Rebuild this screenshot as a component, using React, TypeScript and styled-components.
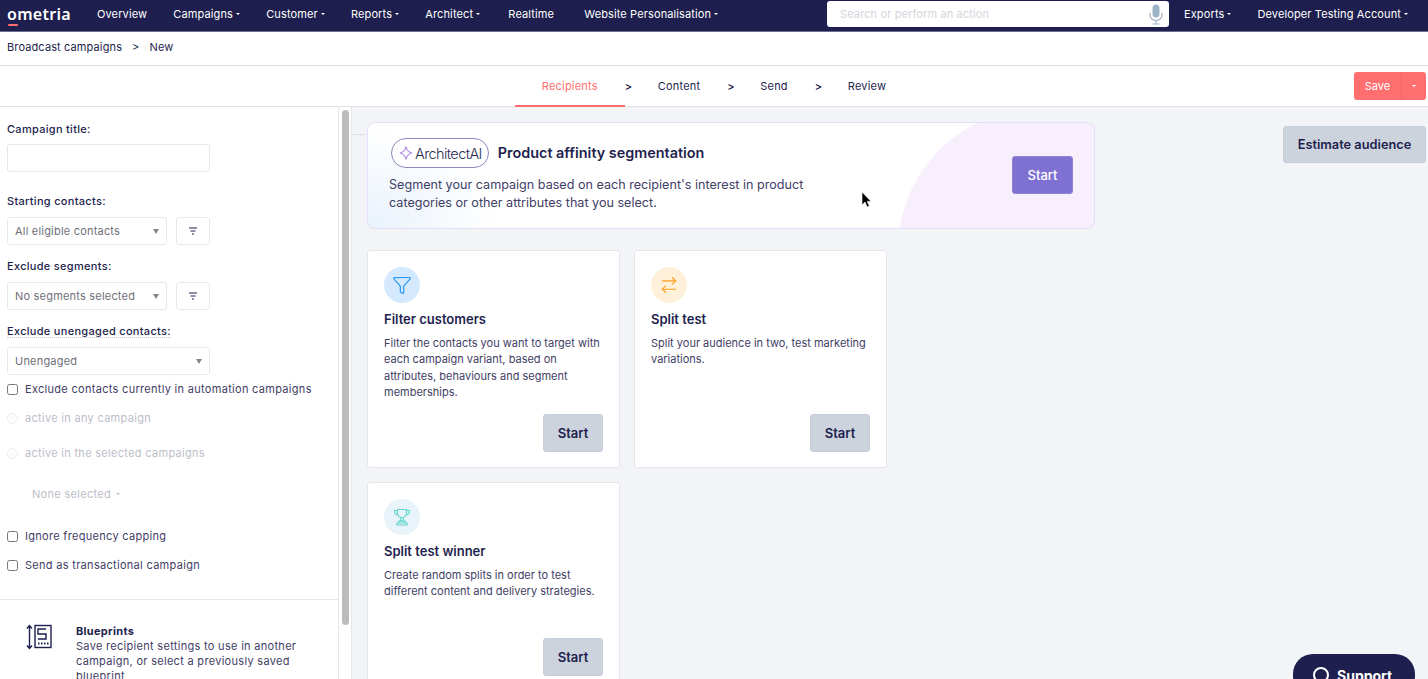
import React from "react"
import styled, { createGlobalStyle } from "styled-components"
import { ArrowRightLeft, Filter } from "lucide-react"

const navy = "#1e1f4e"
const body = "#3f4066"
const coral = "#ff6f6f"
const uiFont = `"Inter", "Liberation Sans", sans-serif`

const GlobalStyle = createGlobalStyle`
  html, body {
    margin: 0;
    height: 100%;
    overflow: hidden;
    background: #f3f4f8;
    font-family: ${uiFont};
    color: ${navy};
  }
  #root { height: 100%; }
`

const Page = styled.div`
  position: relative;
  display: flex;
  flex-direction: column;
  height: 679px;
  overflow: hidden;
`

const TopNav = styled.nav`
  display: flex;
  align-items: center;
  flex: none;
  height: 28px;
  padding: 0 20px 3px 7px;
  background: ${navy};
  border-bottom: 1px solid #6d6e8f;
  color: #fff;
  font-size: 11px;
  letter-spacing: 0.12px;
`

const Logo = styled.div`
  position: relative;
  width: 63px;
  margin-right: 27px;
  font-family: "Noto Sans", sans-serif;
  font-size: 16px;
  font-weight: 600;
  line-height: 18px;
  letter-spacing: 0.3px;

  &::after {
    content: "";
    position: absolute;
    left: 1px;
    bottom: -3px;
    width: 10px;
    height: 2px;
    border-radius: 1px;
    background: ${coral};
  }
`

const NavItems = styled.div<{ $gap: number }>`
  display: flex;
  gap: ${p => p.$gap}px;
`

const NavItem = styled.span<{ $before?: number; $after?: number }>`
  display: inline-flex;
  align-items: center;
  gap: 3px;
  margin: 0 ${p => p.$after || 0}px 0 ${p => p.$before || 0}px;
  white-space: nowrap;
`

const Caret = styled.i<{ $color?: string }>`
  width: 0;
  height: 0;
  border-left: 2px solid transparent;
  border-right: 2px solid transparent;
  border-top: 2px solid ${p => p.$color || "#fff"};
`

const SearchBox = styled.div`
  display: flex;
  align-items: center;
  justify-content: space-between;
  width: 342px;
  height: 26px;
  margin: 0 15px 0 auto;
  padding: 0 6px 0 13px;
  box-sizing: border-box;
  background: #fff;
  border-radius: 3px;
  color: #d4d5dc;
  font-size: 11px;
`

const Breadcrumbs = styled.div`
  display: flex;
  align-items: center;
  flex: none;
  gap: 10px;
  height: 30px;
  padding: 0 7px 3px;
  background: #fff;
  border-bottom: 1px solid #dcdde1;
  font-size: 11px;
  letter-spacing: 0.12px;
`

const StepsBar = styled.div`
  display: grid;
  grid-template-columns: 1fr auto 1fr;
  align-items: stretch;
  flex: none;
  height: 40px;
  background: #fff;
  border-bottom: 1px solid #e2e3e8;
`

const Steps = styled.div`
  grid-column: 2;
  display: flex;
  align-items: center;
  height: 40px;
  font-size: 11px;
  letter-spacing: 0.2px;
`

const Step = styled.div<{ $active?: boolean }>`
  display: flex;
  align-items: center;
  align-self: stretch;
  padding: 0 27px;
  color: ${p => (p.$active ? coral : navy)};
  border-bottom: 2px solid ${p => (p.$active ? coral : "transparent")};
  box-sizing: border-box;
  height: 41px;
`

const StepSep = styled.span`
  width: 6px;
  font-size: 11px;
  font-weight: 600;
  text-align: center;
`

const SaveButton = styled.div`
  justify-self: end;
  align-self: start;
  display: flex;
  height: 28px;
  margin: 6px 2px 0 0;
  border-radius: 3px;
  overflow: hidden;
  background: ${coral};
  color: #fff;
  font-size: 11px;
`

const SaveLabel = styled.span`
  display: flex;
  align-items: center;
  justify-content: center;
  width: 47px;
  border-right: 1px solid #f46565;
`

const SaveCaret = styled.span`
  display: flex;
  align-items: center;
  justify-content: center;
  width: 24px;
`

const Content = styled.div`
  display: flex;
  flex: 1;
  min-height: 0;
`

const Sidebar = styled.aside`
  flex: none;
  width: 338px;
  padding-top: 15px;
  overflow: hidden;
  background: #fff;
  border-right: 1px solid #e6e7ea;
  font-size: 11px;
  letter-spacing: 0.3px;
`

const Track = styled.div`
  flex: none;
  width: 13px;
  padding: 3px 3px 0;
  box-sizing: border-box;
  background: #fff;
  border-right: 1px solid #e6e7ea;
`

const Thumb = styled.div`
  width: 7px;
  height: 515px;
  border-radius: 4px;
  background: #bcbcbc;
`

const FieldLabel = styled.div<{ $top?: number; $underline?: boolean; $gap?: number }>`
  width: fit-content;
  height: 14px;
  margin: ${p => p.$top || 0}px 0 ${p => p.$gap ?? 9}px 7px;
  box-sizing: border-box;
  font-weight: 500;
  line-height: 14px;
  border-bottom: ${p => (p.$underline ? "1px dotted #c9c9d4" : "none")};
`

const TextInput = styled.input`
  display: block;
  width: 203px;
  height: 28px;
  margin-left: 7px;
  box-sizing: border-box;
  background: #fff;
  border: 1px solid #e8e8ec;
  border-radius: 3px;
  outline: none;
`

const SelectRow = styled.div`
  display: flex;
  gap: 9px;
  margin-left: 7px;
`

const SelectBox = styled.div<{ $width: number }>`
  display: flex;
  align-items: center;
  justify-content: space-between;
  width: ${p => p.$width}px;
  height: 28px;
  padding: 0 7px;
  box-sizing: border-box;
  background: #fff;
  border: 1px solid #e8e8ec;
  border-radius: 3px;
  color: #6f7078;
  letter-spacing: 0.2px;
`

const SelectArrow = styled.i`
  width: 0;
  height: 0;
  border-left: 3.5px solid transparent;
  border-right: 3.5px solid transparent;
  border-top: 5px solid #85858a;
`

const IconButton = styled.div`
  display: flex;
  align-items: center;
  justify-content: center;
  width: 34px;
  height: 28px;
  box-sizing: border-box;
  border: 1px solid #e8e8ec;
  border-radius: 3px;
`

const CheckRow = styled.label<{ $top: number; $muted?: boolean }>`
  display: flex;
  align-items: center;
  gap: 7px;
  height: 16px;
  margin: ${p => p.$top}px 0 0 7px;
  color: ${p => (p.$muted ? "#bdbdca" : body)};
  white-space: nowrap;
`

const CheckBox = styled.input`
  flex: none;
  width: 11px;
  height: 11px;
  margin: 0;
  accent-color: ${navy};
  opacity: ${p => (p.disabled ? 0.35 : 1)};
`

const NoneSelected = styled.div`
  display: flex;
  align-items: center;
  gap: 5px;
  height: 16px;
  margin: 25px 0 0 32px;
  color: #bdbdca;
`

const Divider = styled.div`
  height: 1px;
  margin-top: 26px;
  background: #e6e7ea;
`

const BlueprintRow = styled.div`
  display: flex;
  gap: 24px;
  margin: 24px 40px 0 26px;

  svg {
    flex: none;
  }
`

const BlueprintText = styled.div`
  color: ${body};
  line-height: 15px;
`

const BlueprintTitle = styled.div`
  color: ${navy};
  font-weight: 700;
`

const Main = styled.main`
  position: relative;
  display: flex;
  flex: 1;
  min-width: 0;
  padding: 15px 2px 0 15px;
  background: #f3f4f8;
  overflow: hidden;
`

const Column = styled.div`
  flex: none;
  width: 728px;
`

const Hero = styled.section`
  position: relative;
  display: flex;
  align-items: center;
  justify-content: space-between;
  height: 107px;
  padding: 0 21px 1px 21px;
  box-sizing: border-box;
  border: 1px solid #e3dff6;
  border-radius: 8px;
  background:
    radial-gradient(circle 144px at 673px 128px, #f7f0fc 99%, transparent 100%),
    radial-gradient(ellipse 130px 100px at 0 100%, #e9f2fb 0%, #fff 100%);
  background-color: #fff;

  &::before {
    content: "";
    position: absolute;
    left: -15px;
    top: 11px;
    width: 12px;
    height: 1px;
    background: #dcdde1;
  }
`

const HeroHead = styled.div`
  display: flex;
  align-items: center;
  gap: 9px;
  margin: 0 0 8px 2px;
`

const AiBadge = styled.div`
  display: flex;
  align-items: center;
  gap: 1px;
  height: 28px;
  padding: 0 6px;
  border: 1px solid #8b87bb;
  border-radius: 15px;
  background: #fff;
  color: #2c2d52;
  font-size: 14.5px;
  font-weight: 300;
  letter-spacing: -0.6px;
`

const HeroTitle = styled.h2`
  margin: 0;
  font-size: 14.4px;
  font-weight: 600;
  line-height: 18px;
`

const HeroText = styled.p`
  width: 430px;
  margin: 0;
  color: ${body};
  font-size: 12.6px;
  line-height: 18px;
`

const StartButton = styled.button<{ $accent?: boolean }>`
  flex: none;
  width: ${p => (p.$accent ? 61 : 60)}px;
  height: 38px;
  padding: 0;
  border: 1px solid ${p => (p.$accent ? "#8d82d8" : "#c6ced9")};
  border-radius: 3px;
  background: ${p => (p.$accent ? "#7f71d2" : "#ccd3dd")};
  color: ${p => (p.$accent ? "#fff" : navy)};
  font-family: ${uiFont};
  font-size: 13px;
  font-weight: ${p => (p.$accent ? 500 : 600)};
`

const CardGrid = styled.div`
  display: grid;
  grid-template-columns: repeat(2, 253px);
  gap: 14px;
  margin-top: 21px;
`

const Card = styled.article<{ $height: number }>`
  display: flex;
  flex-direction: column;
  height: ${p => p.$height}px;
  padding: 16px 16px 15px;
  box-sizing: border-box;
  background: #fff;
  border: 1px solid #e4e6ec;
  border-radius: 3px;
`

const IconCircle = styled.div<{ $bg: string; $fg: string }>`
  display: flex;
  align-items: center;
  justify-content: center;
  width: 36px;
  height: 36px;
  border-radius: 50%;
  background: ${p => p.$bg};
  color: ${p => p.$fg};
`

const CardTitle = styled.h3`
  margin: 8px 0 8px;
  font-size: 13px;
  font-weight: 600;
  line-height: 16px;
`

const CardText = styled.p`
  margin: 0;
  color: ${body};
  font-size: 11px;
  line-height: 16.3px;
`

const CardFooter = styled.div`
  display: flex;
  justify-content: flex-end;
  margin-top: auto;
`

const EstimateButton = styled.button`
  width: 143px;
  height: 37px;
  margin: 4px 0 0 auto;
  padding: 0;
  border: 1px solid #c6ced9;
  border-radius: 3px;
  background: #ccd3dd;
  color: ${navy};
  font-family: ${uiFont};
  font-size: 12.8px;
  font-weight: 600;
`

const Support = styled.div`
  position: absolute;
  left: 1293px;
  top: 654px;
  display: flex;
  align-items: center;
  gap: 8px;
  width: 122px;
  height: 42px;
  padding-left: 20px;
  box-sizing: border-box;
  border-radius: 20px;
  background: ${navy};
  color: #fff;
  font-size: 14px;
  font-weight: 700;
`

const SupportRing = styled.i`
  width: 12px;
  height: 12px;
  border: 2.5px solid #fff;
  border-radius: 50%;
`

const Pointer = styled.svg`
  position: absolute;
  left: 861px;
  top: 191px;
`

const MicIcon = () => (
  <svg width="14" height="21" viewBox="0 0 14 21" fill="none">
    <rect x="3.5" y="0.5" width="7" height="13" rx="3.5" fill="#9fb3c8" />
    <path d="M1 9v1.5a6 6 0 0 0 12 0V9" stroke="#9fb3c8" strokeWidth="1.2" />
    <path d="M7 16.5V20M3.5 20h7" stroke="#9fb3c8" strokeWidth="1.2" />
  </svg>
)

const FilterLines = () => (
  <svg width="10" height="8" viewBox="0 0 10 8" fill="none" stroke={navy} strokeWidth="1">
    <path d="M1 1h8M2.5 4h5M4 7h2" />
  </svg>
)

const Sparkle = () => (
  <svg width="16" height="16" viewBox="0 0 16 16" fill="none" stroke="#b08ae8" strokeWidth="1.2">
    <path d="M8 1.5c.6 3.6 2.4 5.6 6 6.5-3.6.9-5.4 2.9-6 6.5-.6-3.6-2.4-5.6-6-6.5 3.6-.9 5.4-2.9 6-6.5z" />
  </svg>
)

const TrophyIcon = () => (
  <svg width="20" height="20" viewBox="0 0 20 20" fill="none" stroke="currentColor" strokeWidth="1.2">
    <path d="M5.5 2.5h9v3.5c0 2.6-2 4.5-4.5 4.5S5.5 8.6 5.5 6z" />
    <path d="M5.5 3.5H2.5c0 2.8 1 4 3.5 4.5M14.5 3.5h3c0 2.8-1 4-3.5 4.5" />
    <path d="M8.8 10.5v3.5M11.2 10.5v3.5M6.8 14.2h6.4v1.8H6.8zM5 16h10v2H5z" />
  </svg>
)

const BlueprintIcon = () => (
  <svg width="26" height="26" viewBox="0 0 26 26" fill="none" stroke={navy}>
    <path d="M3.5 2v22M1 4.5l2.5-3 2.5 3M1 21.5l2.5 3 2.5-3" strokeWidth="1.4" />
    <rect x="9" y="1.5" width="16" height="22" strokeWidth="1.4" />
    <path d="M20 5h-8v5h8v5h-8" strokeWidth="1.4" />
    <path d="M12 19.5h1.5M15 19.5h1.5M18 19.5h1.5M21 19.5h1.5" strokeWidth="2" />
  </svg>
)

const navLinks = [
  { label: "Overview" },
  { label: "Campaigns", caret: true },
  { label: "Customer", caret: true },
  { label: "Reports", caret: true },
  { label: "Architect", caret: true },
  { label: "Realtime", before: 2, after: 4 },
  { label: "Website Personalisation", caret: true },
]

const steps = ["Recipients", "Content", "Send", "Review"]

const cards = [
  {
    title: "Filter customers",
    text: "Filter the contacts you want to target with each campaign variant, based on attributes, behaviours and segment memberships.",
    bg: "#d4e9fd",
    fg: "#2f9bf4",
    icon: <Filter size={20} strokeWidth={1.5} />,
    height: 218,
  },
  {
    title: "Split test",
    text: "Split your audience in two, test marketing variations.",
    bg: "#fff0da",
    fg: "#fb9f1c",
    icon: <ArrowRightLeft size={20} strokeWidth={1.3} />,
    height: 218,
  },
  {
    title: "Split test winner",
    text: "Create random splits in order to test different content and delivery strategies.",
    bg: "#e8f4fa",
    fg: "#62d6cc",
    icon: <TrophyIcon />,
    height: 210,
  },
]

export default function App() {
  return (
    <Page>
      <GlobalStyle />
      <TopNav>
        <Logo>ometria</Logo>
        <NavItems $gap={26.2}>
          {navLinks.map(link => (
            <NavItem key={link.label} $before={link.before} $after={link.after}>
              {link.label}
              {link.caret && <Caret />}
            </NavItem>
          ))}
        </NavItems>
        <SearchBox>
          Search or perform an action
          <MicIcon />
        </SearchBox>
        <NavItems $gap={26}>
          <NavItem>
            Exports
            <Caret />
          </NavItem>
          <NavItem>
            Developer Testing Account
            <Caret />
          </NavItem>
        </NavItems>
      </TopNav>

      <Breadcrumbs>
        <span>Broadcast campaigns</span>
        <span>&gt;</span>
        <span>New</span>
      </Breadcrumbs>

      <StepsBar>
        <Steps>
          {steps.map((step, i) => (
            <React.Fragment key={step}>
              {i > 0 && <StepSep>&gt;</StepSep>}
              <Step $active={i === 0}>{step}</Step>
            </React.Fragment>
          ))}
        </Steps>
        <SaveButton>
          <SaveLabel>Save</SaveLabel>
          <SaveCaret>
            <Caret />
          </SaveCaret>
        </SaveButton>
      </StepsBar>

      <Content>
        <Sidebar>
          <FieldLabel $gap={8}>Campaign title:</FieldLabel>
          <TextInput />

          <FieldLabel $top={22}>Starting contacts:</FieldLabel>
          <SelectRow>
            <SelectBox $width={160}>
              All eligible contacts
              <SelectArrow />
            </SelectBox>
            <IconButton>
              <FilterLines />
            </IconButton>
          </SelectRow>

          <FieldLabel $top={14}>Exclude segments:</FieldLabel>
          <SelectRow>
            <SelectBox $width={160}>
              No segments selected
              <SelectArrow />
            </SelectBox>
            <IconButton>
              <FilterLines />
            </IconButton>
          </SelectRow>

          <FieldLabel $top={14} $underline>
            Exclude unengaged contacts:
          </FieldLabel>
          <SelectRow>
            <SelectBox $width={203}>
              Unengaged
              <SelectArrow />
            </SelectBox>
          </SelectRow>

          <CheckRow $top={6}>
            <CheckBox type="checkbox" />
            Exclude contacts currently in automation campaigns
          </CheckRow>
          <CheckRow $top={13} $muted>
            <CheckBox type="radio" disabled />
            active in any campaign
          </CheckRow>
          <CheckRow $top={19} $muted>
            <CheckBox type="radio" disabled />
            active in the selected campaigns
          </CheckRow>
          <NoneSelected>
            None selected
            <Caret $color="#bdbdca" />
          </NoneSelected>
          <CheckRow $top={26}>
            <CheckBox type="checkbox" />
            Ignore frequency capping
          </CheckRow>
          <CheckRow $top={13}>
            <CheckBox type="checkbox" />
            Send as transactional campaign
          </CheckRow>
          <Divider />
          <BlueprintRow>
            <BlueprintIcon />
            <BlueprintText>
              <BlueprintTitle>Blueprints</BlueprintTitle>
              Save recipient settings to use in another campaign, or select a previously saved blueprint
            </BlueprintText>
          </BlueprintRow>
        </Sidebar>
        <Track>
          <Thumb />
        </Track>

        <Main>
          <Column>
            <Hero>
              <div>
                <HeroHead>
                  <AiBadge>
                    <Sparkle />
                    ArchitectAI
                  </AiBadge>
                  <HeroTitle>Product affinity segmentation</HeroTitle>
                </HeroHead>
                <HeroText>
                  Segment your campaign based on each recipient's interest in product categories or other attributes
                  that you select.
                </HeroText>
              </div>
              <StartButton $accent>Start</StartButton>
            </Hero>

            <CardGrid>
              {cards.map(card => (
                <Card key={card.title} $height={card.height}>
                  <IconCircle $bg={card.bg} $fg={card.fg}>
                    {card.icon}
                  </IconCircle>
                  <CardTitle>{card.title}</CardTitle>
                  <CardText>{card.text}</CardText>
                  <CardFooter>
                    <StartButton>Start</StartButton>
                  </CardFooter>
                </Card>
              ))}
            </CardGrid>
          </Column>
          <EstimateButton>Estimate audience</EstimateButton>
        </Main>
      </Content>

      <Support>
        <SupportRing />
        Support
      </Support>
      <Pointer width="12" height="18" viewBox="0 0 12 18">
        <path d="M1 1v13l3-3 2.2 5 2.2-1-2.2-4.6H10z" fill="#000" stroke="#fff" strokeWidth="0.6" />
      </Pointer>
    </Page>
  )
}
